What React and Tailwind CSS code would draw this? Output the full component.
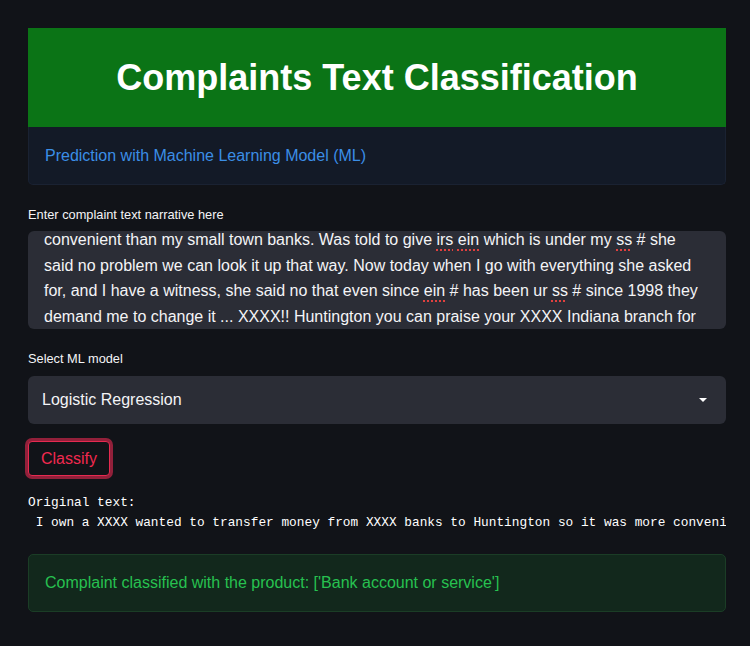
import React from "react";

const sans = { fontFamily: '"Liberation Sans", Arial, Helvetica, sans-serif' };

function Miss({ children }) {
  return (
    <span className="underline decoration-dotted decoration-[#e0403f] decoration-2 underline-offset-[4px]">
      {children}
    </span>
  );
}

export default function App() {
  return (
    <div className="min-h-screen w-[750px] h-[646px] overflow-hidden bg-[#111318] text-white" style={sans}>
      <div className="pl-[28px] pr-[24px] pt-[28px]">
        <div className="h-[99px] bg-[#0b7416] flex items-center justify-center">
          <h1 className="text-[36px] font-bold leading-none">Complaints Text Classification</h1>
        </div>

        <div className="h-[58px] bg-[#131a27] border border-t-0 border-[#1a2232] rounded-b-[5px] flex items-center px-[16px]">
          <span className="text-[16px] text-[#3b8ee6]">Prediction with Machine Learning Model (ML)</span>
        </div>

        <div className="mt-[22px] mb-[8px] text-[12.8px] leading-[16px] text-[#f4f4f6]">
          Enter complaint text narrative here
        </div>
        <div className="h-[98px] bg-[#2b2d36] rounded-[6px] overflow-hidden">
          <div className="-mt-[4px] px-[16px] text-[16px] leading-[25.6px] text-[#f4f4f6] whitespace-nowrap">
            <div>
              convenient than my small town banks. Was told to give <Miss>irs</Miss> <Miss>ein</Miss> which is under my <Miss>ss</Miss> # she
            </div>
            <div>said no problem we can look it up that way. Now today when I go with everything she asked</div>
            <div>
              for, and I have a witness, she said no that even since <Miss>ein</Miss> # has been ur <Miss>ss</Miss> # since 1998 they
            </div>
            <div>demand me to change it ... XXXX!! Huntington you can praise your XXXX Indiana branch for</div>
          </div>
        </div>

        <div className="mt-[22px] mb-[9px] text-[12.8px] leading-[16px] text-[#f4f4f6]">Select ML model</div>
        <div className="h-[48px] bg-[#2b2d36] rounded-[6px] flex items-center justify-between pl-[14px] pr-[19px]">
          <span className="text-[16px] text-[#f4f4f6]">Logistic Regression</span>
          <span className="w-0 h-0 border-l-[4px] border-r-[4px] border-t-[4px] border-l-transparent border-r-transparent border-t-white"></span>
        </div>

        <div className="mt-[17px]">
          <button className="h-[35px] px-[12px] rounded-[4px] border border-[#e62a50] text-[16px] text-[#f1294f] bg-[#111318] shadow-[0_0_0_3px_rgba(190,38,70,0.75)]">
            Classify
          </button>
        </div>

        <div
          className="mt-[17px] text-[12.8px] leading-[20px] text-white whitespace-pre overflow-hidden"
          style={{ fontFamily: '"Liberation Mono", "Courier New", monospace' }}
        >
          <div>Original text:</div>
          <div> I own a XXXX wanted to transfer money from XXXX banks to Huntington so it was more convenient than my small town banks.</div>
        </div>

        <div className="mt-[21px] h-[58px] bg-[#12281c] border border-[#1b3d26] rounded-[5px] flex items-center px-[16px]">
          <span className="text-[16px] text-[#27c150]">
            Complaint classified with the product: ['Bank account or service']
          </span>
        </div>
      </div>
    </div>
  );
}
